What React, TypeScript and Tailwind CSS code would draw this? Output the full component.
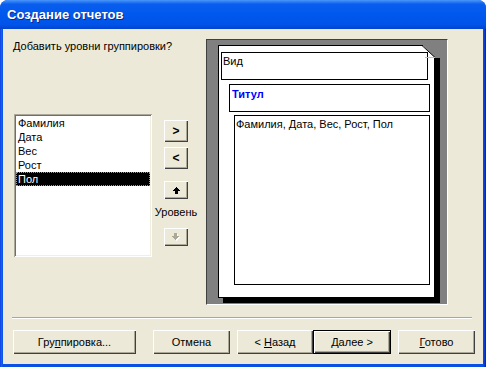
import React from 'react'

const btn =
  "flex items-center justify-center bg-[#ece9d8] text-black shadow-[inset_1px_1px_#ffffff,inset_-1px_-1px_#404040,inset_-2px_-2px_#aca899]";

const fields = ["Фамилия", "Дата", "Вес", "Рост", "Пол"];

function UpArrow() {
  return (
    <svg width="7" height="7" viewBox="0 0 7 7" shapeRendering="crispEdges">
      <rect x="3" y="0" width="1" height="1" fill="#000" />
      <rect x="2" y="1" width="3" height="1" fill="#000" />
      <rect x="1" y="2" width="5" height="1" fill="#000" />
      <rect x="0" y="3" width="7" height="1" fill="#000" />
      <rect x="2" y="4" width="3" height="3" fill="#000" />
    </svg>
  );
}

function DownArrow() {
  const shape = (dx: number, dy: number, c: string) => (
    <g transform={`translate(${dx} ${dy})`} fill={c}>
      <rect x="2" y="0" width="3" height="3" />
      <rect x="0" y="3" width="7" height="1" />
      <rect x="1" y="4" width="5" height="1" />
      <rect x="2" y="5" width="3" height="1" />
      <rect x="3" y="6" width="1" height="1" />
    </g>
  );
  return (
    <svg width="8" height="8" viewBox="0 0 8 8" shapeRendering="crispEdges">
      {shape(1, 1, "#ffffff")}
      {shape(0, 0, "#aca899")}
    </svg>
  );
}

function PageFold() {
  return (
    <svg
      width="19"
      height="13"
      viewBox="0 0 19 13"
      shapeRendering="crispEdges"
      className="absolute top-[-1px] right-[-6px]"
    >
      <rect x="14" y="0" width="5" height="13" fill="#808080" />
      <polygon points="1,0 14,0 14,12" fill="#808080" />
      <line x1="1" y1="0.5" x2="14" y2="12.5" stroke="#000" strokeWidth="1" shapeRendering="auto" />
      <rect x="4" y="12" width="10" height="1" fill="#c0c0c0" />
    </svg>
  );
}

export default function App() {
  return (
    <div className="w-[486px] h-[367px] flex flex-col bg-[#0a4fe0] rounded-t-[8px] overflow-hidden font-['Liberation_Sans',Tahoma,sans-serif] text-[11px] leading-[13px] text-black">
      {/* title bar */}
      <div className="h-[29px] shrink-0 flex items-center pl-[7px] bg-[linear-gradient(to_bottom,#4a96fb_0%,#0a5eed_14%,#0058ee_50%,#0053e8_85%,#0343cc_100%)]">
        <span className="text-white font-bold text-[13px] leading-[16px] [text-shadow:1px_1px_#0b2a8a]">
          Создание отчетов
        </span>
      </div>

      <div className="flex-1 flex px-[3px] pb-[3px] bg-[linear-gradient(to_right,#0831d9_0px,#1665f0_1px,#0a50e3_3px,#0a50e3_calc(100%-3px),#0635d0_calc(100%-1px),#001ea0_100%)]">
        <div className="flex-1 flex flex-col bg-[#ece9d8]">
          {/* main area */}
          <div className="flex pt-[10px]">
            <div className="w-[203px] flex flex-col">
              <div className="ml-[10px] mt-[1px] h-[13px] whitespace-nowrap">
                Добавить уровни группировки?
              </div>
              <div className="flex mt-[61px]">
                <div className="ml-[11px] w-[138px] h-[143px] bg-white p-[2px] shadow-[inset_1px_1px_#aca899,inset_-1px_-1px_#ffffff,inset_2px_2px_#716f64,inset_-2px_-2px_#f1efe2]">
                  {fields.map((f, i) => (
                    <div
                      key={f}
                      className={
                        i === fields.length - 1
                          ? "h-[14px] pl-[1px] bg-black text-white border border-dotted border-[#9a9a9a] leading-[12px]"
                          : "h-[14px] pl-[2px] leading-[14px]"
                      }
                    >
                      {f}
                    </div>
                  ))}
                </div>
                <div className="w-[48px] flex flex-col items-center mt-[6px]">
                  <button className={`${btn} w-[24px] h-[22px] font-bold text-[12px]`}>&gt;</button>
                  <button className={`${btn} w-[24px] h-[22px] mt-[5px] font-bold text-[12px]`}>&lt;</button>
                  <button className={`${btn} w-[24px] h-[18px] mt-[12px]`}>
                    <UpArrow />
                  </button>
                  <div className="mt-[7px] h-[13px] whitespace-nowrap">Уровень</div>
                  <button className={`${btn} w-[24px] h-[18px] mt-[9px]`}>
                    <DownArrow />
                  </button>
                </div>
              </div>
            </div>

            {/* preview */}
            <div className="w-[242px] h-[266px] bg-[#808080] border-t border-l border-t-[#404040] border-l-[#404040] border-r border-b border-r-white border-b-white pl-[11px] pt-[5px]">
              <div className="relative w-[217px] h-[253px] bg-white border border-black shadow-[5px_5px_0_#000] flex flex-col items-start">
                <PageFold />
                <div className="ml-[2px] mt-[6px] w-[207px] h-[28px] border border-black pl-[1px] pt-[2px]">Вид</div>
                <div className="ml-[10px] mt-[4px] w-[201px] h-[28px] border border-black pl-[2px] pt-[3px] font-bold text-[#0000ff]">
                  Титул
                </div>
                <div className="ml-[15px] mt-[3px] w-[196px] h-[170px] border border-black pl-[1px] pt-[2px] whitespace-nowrap">
                  Фамилия, Дата, Вес, Рост, Пол
                </div>
              </div>
            </div>
          </div>

          {/* separator */}
          <div className="ml-[9px] w-[460px] mt-[12px] h-[1px] bg-[#aca899]" />
          <div className="ml-[9px] w-[460px] h-[1px] bg-white" />

          {/* buttons */}
          <div className="flex mt-[11px] pl-[10px]">
            <button className={`${btn} w-[123px] h-[24px]`}>
              <span>Гру<span className="underline">п</span>пировка...</span>
            </button>
            <button className={`${btn} w-[77px] h-[24px] ml-[17px]`}>Отмена</button>
            <button className={`${btn} w-[76px] h-[24px] ml-[7px]`}>
              <span className="whitespace-pre">&lt; <span className="underline">Н</span>азад</span>
            </button>
            <button className={`${btn} w-[78px] h-[24px] border border-black`}>
              <span className="whitespace-pre"><span className="underline">Д</span>алее &gt;</span>
            </button>
            <button className={`${btn} w-[77px] h-[24px] ml-[7px]`}>
              <span><span className="underline">Г</span>отово</span>
            </button>
          </div>
        </div>
      </div>
    </div>
  );
}
